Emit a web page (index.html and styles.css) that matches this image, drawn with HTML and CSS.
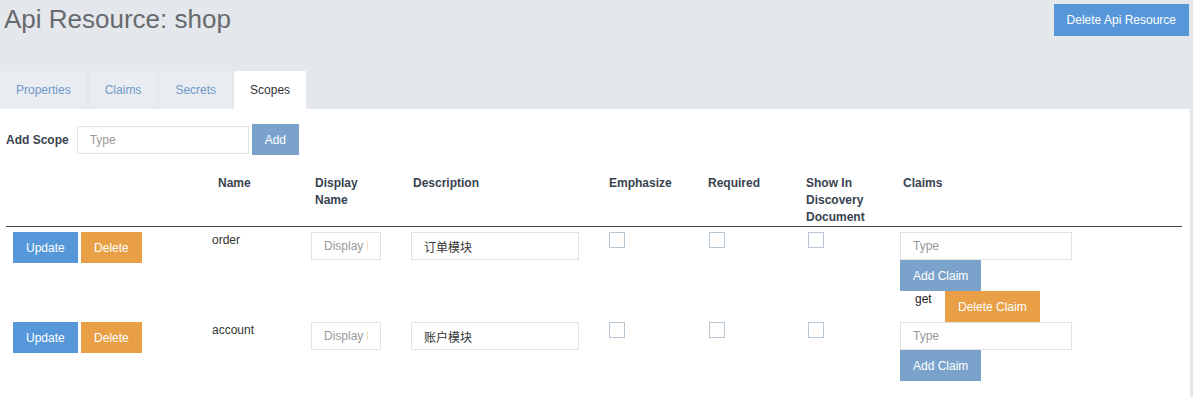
FILE: index.html
```html
<!DOCTYPE html>
<html lang="en">

<head>
    <meta charset="UTF-8">
    <meta name="viewport" content="width=device-width, initial-scale=1.0">
    <title>Api Resource: shop</title>
    <link rel="stylesheet" href="styles.css">
</head>

<body>
    <div class="page-head">
        <h1 class="page-title">Api Resource: shop</h1>
        <button class="btn btn-blue">Delete Api Resource</button>
    </div>

    <ul class="tabs">
        <li class="tab">Properties</li>
        <li class="tab">Claims</li>
        <li class="tab">Secrets</li>
        <li class="tab active">Scopes</li>
    </ul>

    <div class="panel">
        <div class="add-scope">
            <label class="add-scope-label">Add Scope</label>
            <input class="field field-wide" type="text" placeholder="Type">
            <button class="btn btn-muted">Add</button>
        </div>

        <table class="scope-table">
            <colgroup>
                <col style="width: 200px">
                <col style="width: 99px">
                <col style="width: 100px">
                <col style="width: 198px">
                <col style="width: 100px">
                <col style="width: 99px">
                <col style="width: 95px">
                <col>
            </colgroup>
            <thead>
                <tr>
                    <th></th>
                    <th class="th-name">Name</th>
                    <th class="th-display">Display<br>Name</th>
                    <th class="th-desc">Description</th>
                    <th>Emphasize</th>
                    <th class="th-req">Required</th>
                    <th class="th-show">Show In Discovery Document</th>
                    <th>Claims</th>
                </tr>
            </thead>
            <tbody>
                <tr>
                    <td class="cell-actions">
                        <button class="btn btn-blue">Update</button>
                        <button class="btn btn-orange">Delete</button>
                    </td>
                    <td>order</td>
                    <td><input class="field field-small" type="text" placeholder="Display Name"></td>
                    <td><input class="field field-desc" type="text" value="订单模块"></td>
                    <td><input class="check" type="checkbox"></td>
                    <td><input class="check" type="checkbox"></td>
                    <td><input class="check" type="checkbox"></td>
                    <td class="cell-claims">
                        <input class="field field-wide" type="text" placeholder="Type">
                        <button class="btn btn-muted">Add Claim</button>
                        <div class="claim">
                            <span class="claim-name">get</span>
                            <button class="btn btn-orange">Delete Claim</button>
                        </div>
                    </td>
                </tr>
                <tr>
                    <td class="cell-actions">
                        <button class="btn btn-blue">Update</button>
                        <button class="btn btn-orange">Delete</button>
                    </td>
                    <td>account</td>
                    <td><input class="field field-small" type="text" placeholder="Display Name"></td>
                    <td><input class="field field-desc" type="text" value="账户模块"></td>
                    <td><input class="check" type="checkbox"></td>
                    <td><input class="check" type="checkbox"></td>
                    <td><input class="check" type="checkbox"></td>
                    <td class="cell-claims">
                        <input class="field field-wide" type="text" placeholder="Type">
                        <button class="btn btn-muted">Add Claim</button>
                    </td>
                </tr>
            </tbody>
        </table>
    </div>
</body>

</html>
```

FILE: styles.css
```css
body {
    margin: 0;
    background: #e4e7eb;
    font-family: "Liberation Sans", Arial, "Noto Sans CJK SC", sans-serif;
    font-size: 12px;
    color: #333;
}

.page-head {
    display: flex;
    justify-content: space-between;
    align-items: flex-start;
    height: 71px;
    padding: 0 4px;
}

.page-title {
    margin: 4px 0 0;
    font-size: 26px;
    line-height: 30px;
    font-weight: normal;
    color: #676a6e;
}

.page-head .btn {
    margin-top: 4px;
    height: 32px;
}

.btn {
    height: 31px;
    padding: 0 13px;
    border: none;
    border-radius: 0;
    font-family: inherit;
    font-size: 12px;
    color: #fff;
    cursor: pointer;
}

.btn-blue {
    background: #5597d9;
}

.btn-orange {
    background: #e89f46;
}

.btn-muted {
    background: #7ba2cb;
}

.tabs {
    display: flex;
    gap: 2px;
    margin: 0;
    padding: 0;
    list-style: none;
}

.tab {
    height: 38px;
    line-height: 38px;
    padding: 0 16px;
    background: #e9ecf0;
    color: #6f9acb;
}

.tab.active {
    background: #fff;
    color: #333;
}

.panel {
    margin-right: 3px;
    padding: 15px 0 16px;
    background: #fff;
    border-bottom: 1px solid #d6dade;
}

.add-scope {
    display: flex;
    align-items: center;
    gap: 3px;
    padding-left: 6px;
}

.add-scope-label {
    margin-right: 5px;
    font-weight: bold;
    color: #38434f;
}

.field {
    box-sizing: border-box;
    height: 28px;
    padding: 0 12px;
    border: 1px solid #e1e1e1;
    border-radius: 0;
    font-family: inherit;
    font-size: 12px;
    color: #333;
    outline: none;
}

.field::placeholder {
    color: #999;
}

.field-wide {
    width: 172px;
}

.field-small {
    width: 70px;
}

.field-desc {
    width: 168px;
}

.scope-table {
    table-layout: fixed;
    width: 1176px;
    margin: 20px 0 0 6px;
    border-collapse: collapse;
}

.scope-table th {
    padding: 0 0 0 6px;
    text-align: left;
    vertical-align: top;
    line-height: 17px;
    color: #38434f;
    border-bottom: 1px solid #444;
}

.scope-table th.th-name {
    padding-left: 12px;
}

.scope-table th.th-display {
    padding-left: 10px;
}

.scope-table th.th-desc {
    padding-left: 8px;
}

.scope-table th.th-req {
    padding-left: 5px;
}

.scope-table th.th-show {
    padding-left: 4px;
}

.scope-table td {
    padding: 0 0 0 6px;
    vertical-align: top;
    line-height: 17px;
}

.scope-table tbody tr:first-child td {
    padding-top: 5px;
}

.scope-table td.cell-actions {
    padding-left: 7px;
}

.scope-table td.cell-claims {
    padding-left: 3px;
}

.cell-claims .field,
.cell-claims > .btn {
    display: block;
}

.claim {
    display: flex;
    align-items: flex-start;
}

.claim-name {
    width: 30px;
    padding-left: 15px;
    color: #222;
}

.check {
    appearance: none;
    width: 16px;
    height: 16px;
    margin: 0;
    border: 1px solid #b9c7d5;
    background: #fff;
}
```
